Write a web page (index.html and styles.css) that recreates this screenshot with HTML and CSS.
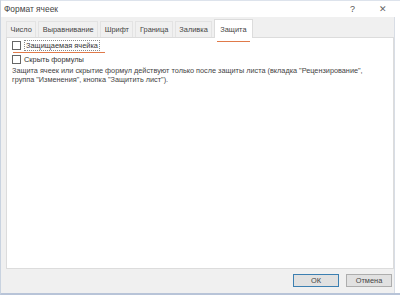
FILE: index.html
```html
<!DOCTYPE html>
<html lang="ru">
<head>
  <meta charset="UTF-8">
  <link rel="stylesheet" href="styles.css">
  <title>Формат ячеек</title>
</head>
<body>
  <div class="dialog">
    <div class="titlebar">
      <span class="title">Формат ячеек</span>
      <span class="help">?</span>
      <span class="close">&#x2715;</span>
    </div>
    <div class="body">
      <div class="tabs">
        <div class="tab">Число</div>
        <div class="tab">Выравнивание</div>
        <div class="tab">Шрифт</div>
        <div class="tab">Граница</div>
        <div class="tab">Заливка</div>
        <div class="tab active">Защита<span class="mark"></span></div>
      </div>
      <div class="panel">
        <label class="check first"><span class="box"></span><span class="focus">Защищаемая ячейка</span><span class="mark"></span></label>
        <label class="check"><span class="box"></span><span>Скрыть формулы</span></label>
        <p class="note">Защита ячеек или скрытие формул действуют только после защиты листа (вкладка "Рецензирование",<br>группа "Изменения", кнопка "Защитить лист").</p>
      </div>
      <div class="footer">
        <button class="btn ok">ОК</button>
        <button class="btn">Отмена</button>
      </div>
    </div>
  </div>
</body>
</html>
```

FILE: styles.css
```css
* {
  margin: 0;
  padding: 0;
  box-sizing: border-box;
}

body {
  font-family: "Liberation Sans", Arial, sans-serif;
  font-size: 7.4px;
  color: #333;
  background: #fff;
  width: 400px;
  height: 298px;
  overflow: hidden;
}

.dialog {
  width: 400px;
  height: 295px;
  display: flex;
  flex-direction: column;
  border-left: 1px solid #c9d3e0;
  border-bottom: 2px solid #b8c4d8;
}

.titlebar {
  height: 17px;
  display: flex;
  align-items: center;
  padding-left: 3px;
  background: #fff;
  border-top: 1px solid #dde3ec;
}

.title {
  flex: 1;
  font-size: 8.4px;
  color: #444;
}

.help {
  font-size: 9px;
  color: #555;
  margin-right: 24px;
}

.close {
  font-size: 9px;
  color: #666;
  margin-right: 13px;
}

.body {
  flex: 1;
  display: flex;
  flex-direction: column;
  background: #f0f0f0;
  margin-right: 5px;
  border-right: 1px solid #d8dde5;
}

.tabs {
  display: flex;
  align-items: flex-end;
  padding: 3px 0 0 5px;
  height: 20px;
  gap: 2px;
}

.tab {
  padding: 0 3.5px;
  height: 16px;
  line-height: 16px;
  border: 1px solid #e3e3e3;
  border-bottom: none;
  color: #444;
  background: #f0f0f0;
}

.tab.active {
  position: relative;
  background: #fff;
  height: 19px;
  line-height: 19px;
  margin-bottom: -1px;
  padding: 0 5px;
  border-color: #dcdcdc;
}

.tab .mark {
  position: absolute;
  left: 2px;
  right: 2px;
  bottom: -4px;
  height: 1px;
  background: #e07a4a;
}

.panel {
  flex: 1;
  background: #fff;
  margin: 0 0 0 5px;
  border: 1px solid #dcdcdc;
  padding: 2px 0 0 5px;
}

.check {
  position: relative;
  display: flex;
  align-items: center;
  height: 11px;
  margin-top: 3px;
  color: #333;
}

.check.first {
  margin-top: 0;
}

.check .mark {
  position: absolute;
  left: 1px;
  top: 12px;
  width: 92px;
  height: 1px;
  background: #e07a4a;
}

.box {
  width: 9px;
  height: 9px;
  border: 1px solid #666;
  background: #fff;
  margin-right: 3px;
}

.focus {
  border: 1px dotted #888;
  padding: 0 1px;
  line-height: 9px;
}

.note {
  margin-top: 1px;
  line-height: 9px;
  font-size: 7.3px;
  color: #444;
}

.footer {
  height: 24px;
  display: flex;
  justify-content: flex-end;
  align-items: flex-start;
  padding-top: 5px;
  gap: 7px;
  padding-right: 2px;
}

.btn {
  width: 46px;
  height: 13px;
  font-family: "Liberation Sans", Arial, sans-serif;
  font-size: 7.4px;
  color: #444;
  background: #e1e1e1;
  border: 1px solid #adadad;
}

.btn.ok {
  border: 1px solid #3c7fb1;
}
```
